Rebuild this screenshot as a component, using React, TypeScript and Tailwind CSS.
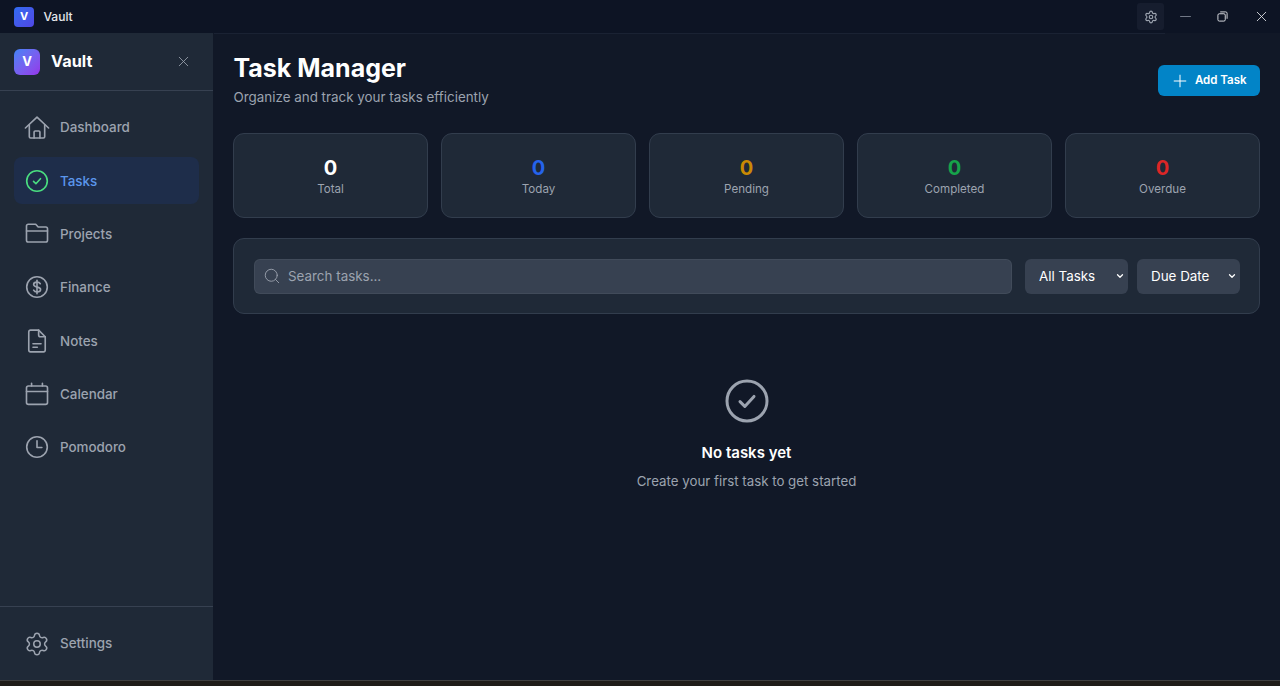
import { Plus, Search, ChevronDown, Settings, X, Minus } from 'lucide-react';
import type { ReactNode } from 'react';

const icon = 'h-[26px] w-[26px] shrink-0';

function Svg({ children, className = icon, width = 1.5 }: { children: ReactNode; className?: string; width?: number }) {
    return (
        <svg viewBox="0 0 24 24" fill="none" stroke="currentColor" strokeWidth={width} strokeLinecap="round" strokeLinejoin="round" className={className}>
            {children}
        </svg>
    );
}

const navItems = [
    {
        label: 'Dashboard',
        icon: (
            <Svg>
                <path d="M1.3 12 12 2l10.7 10" />
                <path d="M4.9 9v11a1.2 1.2 0 0 0 1.2 1.2h11.8a1.2 1.2 0 0 0 1.2-1.2V9" />
                <path d="M9.3 21.2v-5.4a1 1 0 0 1 1-1h3.4a1 1 0 0 1 1 1v5.4" />
            </Svg>
        ),
    },
    {
        label: 'Tasks',
        active: true,
        icon: (
            <Svg className={`${icon} text-[#4ade80]`}>
                <circle cx="12" cy="12" r="9.5" />
                <path d="m8.8 12.3 2.2 2.2 4.2-4.6" />
            </Svg>
        ),
    },
    {
        label: 'Projects',
        icon: (
            <Svg>
                <path d="M2.3 4.6v13.2a1.6 1.6 0 0 0 1.6 1.6h16.2a1.6 1.6 0 0 0 1.6-1.6V7.1a1.6 1.6 0 0 0-1.6-1.6h-7L10.8 3H3.9a1.6 1.6 0 0 0-1.6 1.6Z" />
                <path d="M2.3 9.2h19.4" />
            </Svg>
        ),
    },
    {
        label: 'Finance',
        icon: (
            <Svg>
                <circle cx="12" cy="12" r="9.5" />
                <path d="M15 9c-.5-.9-1.6-1.5-3-1.5-1.8 0-3.1 1-3.1 2.3 0 3.2 6.4 1.4 6.4 4.4 0 1.3-1.5 2.3-3.3 2.3-1.4 0-2.6-.6-3.1-1.6" />
                <path d="M12 5.8v12.4" />
            </Svg>
        ),
    },
    {
        label: 'Notes',
        icon: (
            <Svg>
                <path d="M13.5 2H6a1.6 1.6 0 0 0-1.6 1.6v16.8A1.6 1.6 0 0 0 6 22h12a1.6 1.6 0 0 0 1.6-1.6V8.1Z" />
                <path d="M13.5 2v4.5a1.6 1.6 0 0 0 1.6 1.6h4.5" />
                <path d="M8.3 14.5h7.4" />
                <path d="M8.3 17.8h4" />
            </Svg>
        ),
    },
    {
        label: 'Calendar',
        icon: (
            <Svg>
                <rect x="2.3" y="4.6" width="19.4" height="17" rx="1.8" />
                <path d="M2.3 9.7h19.4" />
                <path d="M7 2.2v2.4" />
                <path d="M17 2.2v2.4" />
            </Svg>
        ),
    },
    {
        label: 'Pomodoro',
        icon: (
            <Svg>
                <circle cx="12" cy="12" r="9.5" />
                <path d="M12 6.3v6.2h4.5" />
            </Svg>
        ),
    },
];

const stats = [
    { label: 'Total', color: 'text-white' },
    { label: 'Today', color: 'text-[#2563eb]' },
    { label: 'Pending', color: 'text-[#ca8a04]' },
    { label: 'Completed', color: 'text-[#16a34a]' },
    { label: 'Overdue', color: 'text-[#dc2626]' },
];

function FilterSelect({ label }: { label: string }) {
    return (
        <div className="relative h-[35px] w-[103px]">
            <select className="h-full w-full appearance-none rounded-md bg-[#374151] pl-[14px] text-[13.4px] text-white outline-none">
                <option>{label}</option>
            </select>
            <ChevronDown className="pointer-events-none absolute top-[12px] right-[3px] h-[10px] w-[10px] text-white" strokeWidth={3} />
        </div>
    );
}

export default function App() {
    return (
        <div className="flex h-[686px] w-[1280px] flex-col overflow-hidden bg-[#111827] font-['Inter',sans-serif]">
            {/* Title bar */}
            <div className="flex h-[33px] shrink-0 items-center bg-[#0d1424] pl-[14px]">
                <div className="flex h-5 w-5 items-center justify-center rounded-[4px] bg-gradient-to-br from-[#2f6bf0] to-[#4f46e5] text-[11px] font-bold text-white">V</div>
                <span className="ml-[9.5px] text-[12px] font-medium text-[#e5e7eb]">Vault</span>
                <div className="ml-auto flex h-full items-center">
                    <div className="flex h-[27px] w-[27px] items-center justify-center rounded-[3px] bg-[#161d2e]">
                        <Settings className="h-[14px] w-[14px] text-[#9ca3af]" />
                    </div>
                    <div className="flex w-[42px] justify-center">
                        <Minus className="h-[17px] w-[17px] text-[#9ca3af]" strokeWidth={1} />
                    </div>
                    <div className="flex w-[32px] justify-center">
                        <svg viewBox="0 0 12 12" fill="none" stroke="#e5e7eb" strokeWidth="1" className="h-[11px] w-[11px]">
                            <rect x="1" y="3" width="8" height="8" rx="1.5" />
                            <path d="M3.5 1H9.5A1.5 1.5 0 0 1 11 2.5V8.5" />
                        </svg>
                    </div>
                    <div className="flex w-[42px] justify-center pl-[4px]">
                        <X className="h-[17px] w-[17px] text-[#e5e7eb]" strokeWidth={1.2} />
                    </div>
                </div>
            </div>

            <div className="flex min-h-0 flex-1">
                {/* Sidebar */}
                <aside className="flex w-[214px] shrink-0 flex-col border-r border-[#111827] bg-[#1f2937]">
                    <div className="flex h-[58px] shrink-0 items-center border-b border-[#374151] pr-[21px] pl-[14px]">
                        <div className="flex h-[26px] w-[26px] items-center justify-center rounded-md bg-gradient-to-br from-[#3b82f6] to-[#9333ea] text-[13px] font-bold text-white">V</div>
                        <span className="ml-[11px] text-[16.3px] font-bold text-white">Vault</span>
                        <X className="ml-auto h-[17px] w-[17px] text-[#9ca3af]" strokeWidth={1.2} />
                    </div>
                    <nav className="flex flex-1 flex-col gap-[6.33px] pt-[13px] pr-[14px] pl-[14px]">
                        {navItems.map((item) => (
                            <div
                                key={item.label}
                                className={`flex h-[47px] items-center gap-[10px] rounded-lg pl-[10px] text-[13.4px] font-medium ${item.active ? 'bg-[#1e2d4a] text-[#5b96ec]' : 'text-[#9ca3af]'}`}
                            >
                                {item.icon}
                                <span>{item.label}</span>
                            </div>
                        ))}
                    </nav>
                    <div className="h-[74px] shrink-0 border-t border-[#374151] pt-[13px] pr-[14px] pl-[14px]">
                        <div className="flex h-[47px] items-center gap-[10px] pl-[10px] text-[13.4px] font-medium text-[#9ca3af]">
                            <Settings className={icon} strokeWidth={1.4} />
                            <span>Settings</span>
                        </div>
                    </div>
                </aside>

                {/* Main content */}
                <main className="min-w-0 flex-1">
                    <div className="mr-[115px] h-px bg-[#1a2233]" />
                    <div className="pt-[15px] pr-[20px] pl-[19px]">
                        <div className="flex items-start justify-between">
                            <div className="pl-[0.5px]">
                                <h1 className="text-[25px] leading-[38px] font-bold text-white">Task Manager</h1>
                                <p className="text-[13.4px] leading-[20px] text-[#9ca3af]">Organize and track your tasks efficiently</p>
                            </div>
                            <button className="mt-[16px] flex h-[31px] w-[102px] items-center justify-center gap-[5px] rounded-md bg-[#0284c7] pr-[1.5px] text-[11.5px] font-semibold text-white">
                                <Plus className="h-5 w-5" strokeWidth={1.2} />
                                Add Task
                            </button>
                        </div>

                        <div className="mt-[26px] grid grid-cols-5 gap-[13px]">
                            {stats.map((stat) => (
                                <div key={stat.label} className="flex h-[85px] flex-col items-center rounded-[11px] border border-[#323d4d] bg-[#1f2937] pt-[20px]">
                                    <span className={`text-[20px] leading-[28px] font-bold ${stat.color}`}>0</span>
                                    <span className="text-[11.6px] leading-[15px] text-[#9ca3af]">{stat.label}</span>
                                </div>
                            ))}
                        </div>

                        <div className="mt-[20px] flex h-[76px] items-center rounded-[11px] border border-[#323d4d] bg-[#1f2937] pr-[19px] pl-[20px]">
                            <div className="flex h-[35px] min-w-0 flex-1 items-center gap-[7px] rounded-md border border-[#4b5563]/50 bg-[#374151] pl-[8px]">
                                <Search className="h-[18px] w-[18px] text-[#9ca3af]" strokeWidth={1.2} />
                                <span className="text-[13.4px] text-[#9ca3af]">Search tasks...</span>
                            </div>
                            <div className="ml-[13px] flex gap-[9px]">
                                <FilterSelect label="All Tasks" />
                                <FilterSelect label="Due Date" />
                            </div>
                        </div>

                        <div className="mt-[63px] flex flex-col items-center">
                            <Svg className="h-12 w-12 text-[#9ca3af]">
                                <circle cx="12" cy="12" r="10" />
                                <path d="m8.5 12.3 2.4 2.4 4.6-5" />
                            </Svg>
                            <h3 className="mt-[16px] text-[15px] leading-[24px] font-semibold text-white">No tasks yet</h3>
                            <p className="mt-[6px] text-[13.3px] leading-[20px] text-[#9ca3af]">Create your first task to get started</p>
                        </div>
                    </div>
                </main>
            </div>

            {/* Window bottom edge */}
            <div className="h-[6px] shrink-0 border-t border-[#3f3f3f] bg-[#1f1c18]" />
        </div>
    );
}
